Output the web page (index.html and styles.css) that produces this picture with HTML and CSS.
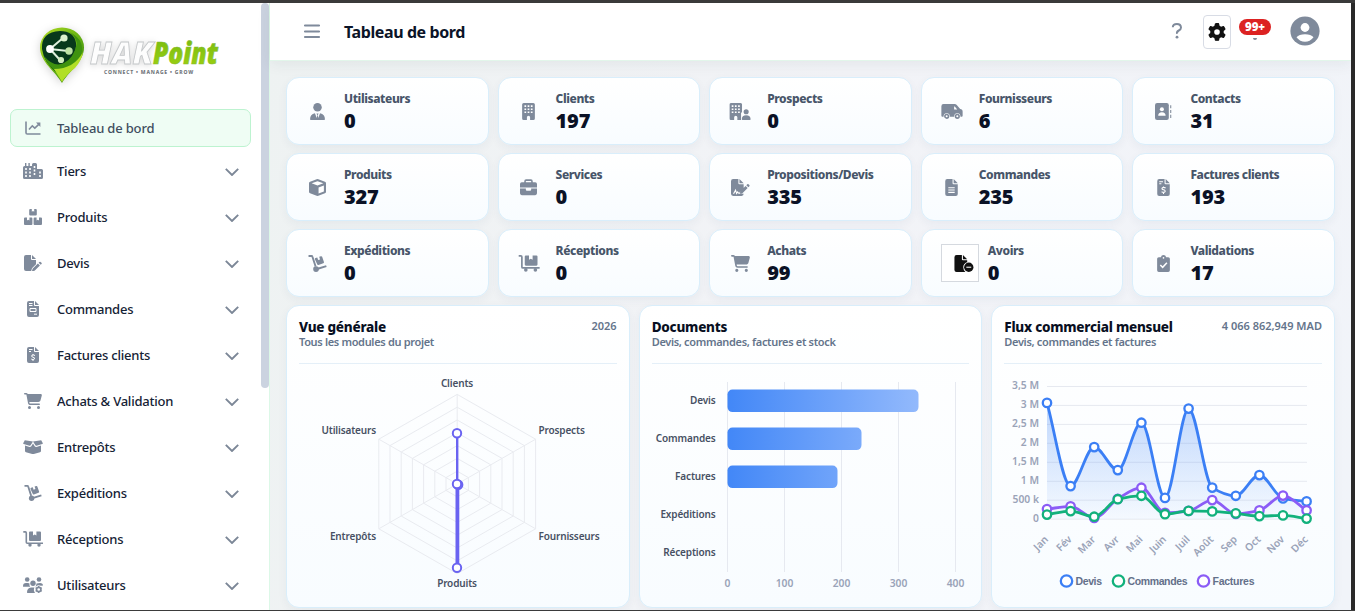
FILE: index.html
```html
<!DOCTYPE html>
<html lang="fr">
<head>
<meta charset="utf-8">
<title>HAKPoint - Tableau de bord</title>
<link rel="stylesheet" href="styles.css">
</head>
<body>
<svg class="defs" aria-hidden="true">
  <symbol id="chart" viewBox="0 0 16 16"><path class="ln" d="M1 1.5v11.2q0 1.3 1.3 1.3H15.5M4 9.500l3.300-3.700 2.500 2.300L14.300 3.800" stroke-width="1.600"/><path d="M11 2.600h4.400V7z"/></symbol>
  <symbol id="city" viewBox="0 0 20 16"><path d="M0 4.5q0-1.5 1.5-1.5H2V0h1.4v3h2V0h1.4v3H9V1.5Q9 0 10.500 0h2Q14 0 14 1.500V6h4.500Q20 6 20 7.500v7q0 1.500-1.500 1.500h-17Q0 16 0 14.500z"/><path class="cut" d="M2.200 5h1.600v2H2.200zm4 0h1.600v2H6.200zM2.200 8.500h1.600v2H2.200zm4 0h1.600v2H6.200zM2.200 12h1.600v2H2.200zm4 0h1.600v2H6.200zM10.700 3h1.600v2h-1.600zm0 3.500h1.600v2h-1.600zm0 3.500h1.600v2h-1.600zM16.200 8.500h1.600v2h-1.600zm0 3.500h1.600v2h-1.600z"/></symbol>
  <symbol id="boxes" viewBox="0 0 18 16"><path d="M5.200 1q0-1 1-1h1.600v2.700l1.200-.7 1.200.7V0h1.600q1 0 1 1v4.500q0 1-1 1H6.200q-1 0-1-1zM0 9.500q0-1 1-1h2v3l1.200-.7 1.200.7v-3h2q1 0 1 1V15q0 1-1 1H1q-1 0-1-1zM9.600 9.500q0-1 1-1h2v3l1.200-.7 1.200.7v-3h2q1 0 1 1V15q0 1-1 1h-6.400q-1 0-1-1z"/></symbol>
  <symbol id="filepen" viewBox="0 0 18 16"><path d="M0 2q0-2 2-2h5v4q0 1 1 1h4v4.300L8 13.200 7.200 16H2q-2 0-2-2zM8 0v4h4zM8.600 13.700l5.300-5.300 2 2-5.300 5.300-2.700.7zM14.600 7.700l.8-.8q.6-.5 1.200 0l.9.9q.5.600 0 1.200l-.8.800z"/></symbol>
  <symbol id="filesign" viewBox="0 0 18 16"><path d="M0 2q0-2 2-2h5v4q0 1 1 1h4v3.500L8 12.500V14h4q0 2-2 2H2q-2 0-2-2zM8 0v4h4zM8.800 11.500l5-5 2 2-5 5-2.700.7zM14.500 5.800l.9-.9q.6-.5 1.200 0l.8.800q.5.600 0 1.200l-.9.900z"/><path class="cutln" d="M2 13.500h.8l1.500-3 1 3.200 1-1.500 1 1.300h1.500" stroke-width="1"/></symbol>
  <symbol id="file" viewBox="0 0 12 16"><path d="M2 0h5v4q0 1 1 1h4v9q0 2-2 2H2q-2 0-2-2V2Q0 0 2 0zM8 0v4h4z"/></symbol>
  <symbol id="filelines" viewBox="0 0 12 16"><use href="#file"/><path class="cutln" d="M3 8.200h6M3 10.400h6M3 12.600h6" stroke-width="1"/></symbol>
  <symbol id="fileinvoice" viewBox="0 0 12 16"><use href="#file"/><path class="cutln" d="M2 2.500h3.500M2 4.500h3.500M3 7.500h6v3H3zM7 13.200h3" stroke-width="1"/></symbol>
  <symbol id="filedollar" viewBox="0 0 12 16"><use href="#file"/><path class="cutln" d="M2 2.500h3.500M2 4.500h2M8 8.500Q6 7.300 4.700 8.500q-.6 1.300 1.300 1.700 2 .4 1.500 1.700Q6.200 13.300 4.200 12M6 7v1.200M6 12.800V14" stroke-width="1"/></symbol>
  <symbol id="fileminus" viewBox="0 0 18 16"><path d="M0 2q0-2 2-2h5v4q0 1 1 1h4v1.500Q8.300 8 8.300 11.500q0 2.800 2 4.500H2q-2 0-2-2zM8 0v4h4z"/><circle cx="13.500" cy="11.500" r="4.400"/><path class="cutln" d="M11.200 11.500h4.600" stroke-width="1"/></symbol>
  <symbol id="cart" viewBox="0 0 576 512"><path d="M0 24C0 10.700 10.700 0 24 0H69.500c22 0 41.500 12.800 50.600 32h411c26.300 0 45.500 25 38.600 50.400l-41 152.300c-8.500 31.400-37 53.300-69.500 53.300H170.700l5.400 28.500c2.200 11.300 12.100 19.500 23.600 19.500H488c13.300 0 24 10.700 24 24s-10.700 24-24 24H199.700c-34.600 0-64.300-24.600-70.700-58.500L77.400 54.500c-.7-3.800-4-6.500-7.900-6.500H24C10.700 48 0 37.300 0 24zM128 464a48 48 0 1 1 96 0 48 48 0 1 1 -96 0zm336-48a48 48 0 1 1 0 96 48 48 0 1 1 0-96z"/></symbol>
  <symbol id="boxopen" viewBox="0 0 20 16"><path d="M1.800 1.300L10 2.400 7.600 6.300q-.4.600-1.100.4L.7 5.100Q-.1 4.800.3 4zM18.200 1.300L10 2.400l2.400 3.900q.4.600 1.100.4l5.800-1.600q.8-.3.400-1.100zM2 6.600l4.500 1.300q1.200.2 1.800-.7L10 4.400l1.700 2.800q.6.900 1.800.7L18 6.600V12q0 1-1 1.300l-6.200 1.600q-.8.200-1.600 0L3 13.300q-1-.3-1-1.300z"/></symbol>
  <symbol id="dolly" viewBox="0 0 18 16"><path class="ln" d="M.5.900h2.800q.7 0 .9.700l3 9.300M8.500 13.200l8.900-2.800" stroke-width="1.800"/><circle cx="7.600" cy="13.300" r="2.700"/><path d="M6.500 3.900q-.3-.9.600-1.200l1.700-.5.800 2.500 1.800-.6-.8-2.500 1.600-.5q.9-.3 1.200.6l1.700 4.900q.3.900-.6 1.200L9.900 9.400q-.9.300-1.200-.6z"/></symbol>
  <symbol id="flatbed" viewBox="0 0 20 16"><path class="ln" d="M.3.900h2q1 0 1 1v9.300q0 1 1 1H20" stroke-width="1.600"/><path d="M6 1.500q0-1 1-1h3v4l1.700-1 1.700 1v-4h3.600q1 0 1 1V9q0 1-1 1H7q-1 0-1-1z"/><circle cx="7" cy="14" r="1.700"/><circle cx="16" cy="14" r="1.700"/></symbol>
  <symbol id="usersgear" viewBox="0 0 20 16"><circle cx="4.200" cy="2.500" r="2.300"/><circle cx="16" cy="2.500" r="2.300"/><circle cx="10" cy="6.200" r="2.700"/><path d="M0 9.200Q0 6 3 6h2q1 0 1.500.4Q6 8 7.200 9.700H.5Q0 9.700 0 9.200zM13.500 6.400Q14.500 6 17 6q3 0 3 2.600l-2 .2q-3-1.500-5 .6h-.5q1-1.400 1-3zM4 15.300Q4 11 8 10.500h3.500Q10 13 12 16H4.500q-.5 0-.5-.7z"/><circle class="ln" cx="15.700" cy="12.500" r="2.200" stroke-width="1.700"/><path class="ln" stroke-width="1.300" d="M15.700 8.900v1.200M15.700 15v1.200M12.600 10.700l1 .6M17.800 13.700l1 .6M12.600 14.300l1-.6M17.800 11.300l1-.6"/></symbol>
  <symbol id="usertie" viewBox="0 0 14 16"><circle cx="7" cy="4" r="4"/><path d="M0 15.300Q0 10.300 4.600 9.600L6.300 14l.5-2.500-.8-1.700h2l-.8 1.700.5 2.500 1.700-4.400Q14 10.300 14 15.300q0 .7-.7.7H.7q-.7 0-.7-.7z"/></symbol>
  <symbol id="building" viewBox="0 0 12 16"><path d="M1.500 0h9Q12 0 12 1.500v13q0 1.500-1.500 1.500h-3v-2.500q0-1.500-1.500-1.500t-1.500 1.500V16h-3Q0 16 0 14.500v-13Q0 0 1.500 0z"/><path class="cut" d="M2.200 2.200h1.600v1.500H2.200zm3 0h1.600v1.500H5.200zm3 0h1.600v1.500H8.200zM2.200 5.200h1.600v1.500H2.200zm3 0h1.600v1.500H5.200zm3 0h1.600v1.500H8.200zM2.200 8.100h1.600v1.400H2.200zm3 0h1.600v1.400H5.200zm3 0h1.600v1.400H8.200z"/></symbol>
  <symbol id="buildinguser" viewBox="0 0 20 16"><use href="#building" width="12" height="16"/><path class="cut" d="M11 16V9h1.200V5.500H20V16z"/><circle cx="15.800" cy="8.300" r="2.400"/><path d="M11.700 15.300q0-3.700 4.100-3.700t4.200 3.700q0 .7-.7.700h-7q-.6 0-.6-.7z"/></symbol>
  <symbol id="truck" viewBox="0 0 20 16"><path d="M0 3q0-2 2-2h10.500q1.200 0 2 .9l3.200 3.700 1 .3q1.300.6 1.300 2V12q0 1-1 1H1q-1 0-1-1z"/><path class="cut" d="M12 3.300h.6l2.300 2.800H12z"/><circle cx="5" cy="12.500" r="2.900" class="cut"/><circle cx="15" cy="12.500" r="2.900" class="cut"/><circle class="ln" cx="5" cy="12.500" r="1.700" stroke-width="1.500"/><circle class="ln" cx="15" cy="12.500" r="1.700" stroke-width="1.500"/></symbol>
  <symbol id="contacts" viewBox="0 0 16 16"><rect width="13" height="16" rx="2"/><path d="M14.300 2h1v3h-1zm0 4.500h1v3h-1zm0 4.500h1v3h-1z"/><circle class="cut" cx="6.500" cy="5.800" r="1.900"/><path class="cut" d="M3 12q0-3.300 3.500-3.300T10 12z"/></symbol>
  <symbol id="cube" viewBox="0 0 16 16"><path d="M7.200.3q.8-.4 1.600 0l6.200 2.300q1 .4 1 1.400v8q0 1-1 1.400l-6.200 2.400q-.8.300-1.600 0L1 13.400Q0 13 0 12V4q0-1 1-1.400z"/><path class="cut" d="M8 2l5.500 2L8 6 2.500 4zM9 8l5-1.800v5.500L9 13.600z"/></symbol>
  <symbol id="briefcase" viewBox="0 0 16 16"><path d="M4 3V2q0-1.700 1.700-1.700h4.600Q12 .3 12 2v1h2.300Q16 3 16 4.700V8H0V4.700Q0 3 1.700 3zM5.500 3h5V1.800h-5zM0 9h5.500v1q0 1 1 1h3q1 0 1-1V9H16v4.500q0 1.700-1.700 1.700H1.700Q0 15.200 0 13.500z" fill-rule="evenodd"/></symbol>
  <symbol id="clipcheck" viewBox="0 0 12 16"><path d="M1.600 2H3.500Q4 0 6 0t2.500 2h1.900Q12 2 12 3.600v10.800q0 1.600-1.600 1.600H1.600Q0 16 0 14.400V3.600Q0 2 1.600 2z"/><circle class="cut" cx="6" cy="2.700" r=".8"/><path class="cutln" d="M3 9.400l2.200 2.200L9.200 7.200" stroke-width="1.400"/></symbol>
  <symbol id="gear" viewBox="0 0 512 512"><path d="M495.900 166.600c3.200 8.700 .5 18.400-6.400 24.600l-43.300 39.400c1.100 8.300 1.700 16.800 1.700 25.400s-.6 17.100-1.700 25.400l43.300 39.400c6.900 6.200 9.600 15.900 6.400 24.600c-4.400 11.900-9.700 23.300-15.800 34.300l-4.700 8.100c-6.600 11-14 21.400-22.100 31.200c-5.900 7.200-15.700 9.600-24.500 6.800l-55.700-17.700c-13.400 10.300-28.200 18.900-44 25.400l-12.500 57.100c-2 9.100-9 16.300-18.200 17.800c-13.800 2.300-28 3.500-42.500 3.500s-28.700-1.200-42.500-3.500c-9.200-1.500-16.200-8.700-18.200-17.800l-12.500-57.100c-15.800-6.500-30.600-15.100-44-25.400L83.100 425.900c-8.800 2.800-18.600 .3-24.500-6.800c-8.100-9.800-15.500-20.200-22.100-31.200l-4.700-8.100c-6.100-11-11.400-22.400-15.800-34.300c-3.200-8.700-.5-18.400 6.400-24.600l43.300-39.400C64.600 273.100 64 264.600 64 256s.6-17.100 1.700-25.400L22.400 191.200c-6.900-6.200-9.600-15.900-6.400-24.600c4.400-11.900 9.700-23.300 15.800-34.300l4.700-8.100c6.600-11 14-21.400 22.100-31.200c5.900-7.200 15.700-9.600 24.500-6.800l55.700 17.700c13.400-10.300 28.200-18.900 44-25.400l12.500-57.100c2-9.100 9-16.300 18.200-17.800C227.300 1.200 241.500 0 256 0s28.700 1.200 42.500 3.500c9.200 1.500 16.200 8.700 18.200 17.800l12.500 57.100c15.800 6.500 30.600 15.100 44 25.400l55.700-17.700c8.800-2.800 18.600-.3 24.500 6.800c8.100 9.800 15.500 20.200 22.100 31.200l4.700 8.100c6.100 11 11.400 22.400 15.800 34.300zM256 336a80 80 0 1 0 0-160 80 80 0 1 0 0 160z"/></symbol>
  <symbol id="down" viewBox="0 0 14 8"><path class="ln" d="M.8.800L7 7 13.200.8" stroke-width="1.900"/></symbol>
</svg>

<div class="app">
  <aside class="sidebar">
    <div class="menu">
      <svg class="logo" viewBox="0 0 200 70" role="img" aria-label="HAKPoint">
        <defs>
          <linearGradient id="pin" x1="0" y1="0" x2="1" y2="1"><stop offset="0" stop-color="#b4dc22"/><stop offset=".5" stop-color="#69b514"/><stop offset="1" stop-color="#2c7a0c"/></linearGradient>
          <linearGradient id="lime" x1="0" y1="0" x2="0" y2="1"><stop offset="0" stop-color="#6fb80f"/><stop offset="1" stop-color="#a2d313"/></linearGradient>
        </defs>
        <g class="pin">
          <path fill="url(#pin)" d="M32 65C26 54 10 44 10 29.500A22 20 0 0 1 54 29.500C54 44 38 54 32 65z"/>
          <path fill="#07391b" d="M12 31Q11 14 30 13q14 0 16 12 1 13-13 22-3 3-5 9Q14 45 12 31z"/>
          <path fill="#3f930f" d="M14 38q10 12 20 7 10-5 13-20-2-8-8-11 14 6 13 19-2 11-12 18-6 6-8 12-4-8-9-12-6-5-9-13z"/>
          <path fill="#b1df26" d="M24 51q20 0 29-17-1 8-8 16-9 7-13 14z"/>
          <path d="M20 31L33 20M20 31l18 2M20 31l10 11" stroke="#dff0dc" stroke-width="2" fill="none"/>
          <circle cx="20" cy="31" r="3.900" fill="#fff"/><circle cx="34" cy="20" r="3.600" fill="#dcf2cd"/><circle cx="39" cy="33" r="3.700" fill="#bfe3a6"/><circle cx="31" cy="42" r="3.100" fill="#d3edc0"/>
        </g>
        <text class="hak" x="60" y="45.500" textLength="63" lengthAdjust="spacingAndGlyphs">HAK</text>
        <text class="point" x="123" y="45.500" textLength="65" lengthAdjust="spacingAndGlyphs">Point</text>
        <text class="tag" x="74" y="56" textLength="90" lengthAdjust="spacingAndGlyphs">CONNECT • MANAGE • GROW</text>
      </svg>
      <nav class="nav">
        <a class="item active"><svg class="ic w16"><use href="#chart"/></svg><span>Tableau de bord</span></a>
        <a class="item"><svg class="ic w20"><use href="#city"/></svg><span>Tiers</span><svg class="chev"><use href="#down"/></svg></a>
        <a class="item"><svg class="ic w18"><use href="#boxes"/></svg><span>Produits</span><svg class="chev"><use href="#down"/></svg></a>
        <a class="item"><svg class="ic w18"><use href="#filepen"/></svg><span>Devis</span><svg class="chev"><use href="#down"/></svg></a>
        <a class="item"><svg class="ic w12"><use href="#fileinvoice"/></svg><span>Commandes</span><svg class="chev"><use href="#down"/></svg></a>
        <a class="item"><svg class="ic w12"><use href="#filedollar"/></svg><span>Factures clients</span><svg class="chev"><use href="#down"/></svg></a>
        <a class="item"><svg class="ic w18"><use href="#cart"/></svg><span>Achats &amp; Validation</span><svg class="chev"><use href="#down"/></svg></a>
        <a class="item"><svg class="ic w20"><use href="#boxopen"/></svg><span>Entrepôts</span><svg class="chev"><use href="#down"/></svg></a>
        <a class="item"><svg class="ic w18"><use href="#dolly"/></svg><span>Expéditions</span><svg class="chev"><use href="#down"/></svg></a>
        <a class="item"><svg class="ic w20"><use href="#flatbed"/></svg><span>Réceptions</span><svg class="chev"><use href="#down"/></svg></a>
        <a class="item"><svg class="ic w20"><use href="#usersgear"/></svg><span>Utilisateurs</span><svg class="chev"><use href="#down"/></svg></a>
      </nav>
    </div>
    <div class="track"><div class="thumb"></div></div>
  </aside>

  <div class="content">
    <header class="topbar">
      <svg class="burger" viewBox="0 0 16 14"><path class="ln" d="M.8 1.500h14.400M.8 7.500h14.400M.8 13h14.400" stroke-width="1.900" stroke-linecap="round"/></svg>
      <h1>Tableau de bord</h1>
      <svg class="help" viewBox="0 0 12 16"><path class="ln" d="M1.800 4.200Q2 1 5.900 1t4.100 3.500q0 1.800-2.200 3T6 10.700" stroke-width="2"/><circle cx="6" cy="14.200" r="1.400"/></svg>
      <button class="settings"><svg><use href="#gear"/></svg></button>
      <div class="alerts"><span class="badge">99+</span><i class="clapper"></i></div>
      <svg class="avatar" viewBox="0 0 30 30"><circle cx="15" cy="15" r="14.600"/><circle class="cut" cx="15" cy="11.500" r="4.400"/><path class="cut" d="M6.500 21.200Q9 18.300 15 18.300t8.500 2.900Q20 25.800 15 25.800T6.500 21.200z"/></svg>
    </header>

    <main class="board">
      <section class="stats">
        <div class="stat"><svg class="ic w14"><use href="#usertie"/></svg><div><h3>Utilisateurs</h3><b>0</b></div></div>
        <div class="stat"><svg class="ic w13"><use href="#building"/></svg><div><h3>Clients</h3><b>197</b></div></div>
        <div class="stat"><svg class="ic w22"><use href="#buildinguser"/></svg><div><h3>Prospects</h3><b>0</b></div></div>
        <div class="stat"><svg class="ic w22"><use href="#truck"/></svg><div><h3>Fournisseurs</h3><b>6</b></div></div>
        <div class="stat"><svg class="ic w17"><use href="#contacts"/></svg><div><h3>Contacts</h3><b>31</b></div></div>
        <div class="stat"><svg class="ic w17"><use href="#cube"/></svg><div><h3>Produits</h3><b>327</b></div></div>
        <div class="stat"><svg class="ic w17"><use href="#briefcase"/></svg><div><h3>Services</h3><b>0</b></div></div>
        <div class="stat"><svg class="ic w19"><use href="#filesign"/></svg><div><h3>Propositions/Devis</h3><b>335</b></div></div>
        <div class="stat"><svg class="ic w13"><use href="#filelines"/></svg><div><h3>Commandes</h3><b>235</b></div></div>
        <div class="stat"><svg class="ic w13"><use href="#filedollar"/></svg><div><h3>Factures clients</h3><b>193</b></div></div>
        <div class="stat"><svg class="ic w19"><use href="#dolly"/></svg><div><h3>Expéditions</h3><b>0</b></div></div>
        <div class="stat"><svg class="ic w22"><use href="#flatbed"/></svg><div><h3>Réceptions</h3><b>0</b></div></div>
        <div class="stat"><svg class="ic w19"><use href="#cart"/></svg><div><h3>Achats</h3><b>99</b></div></div>
        <div class="stat boxed"><span class="frame"><svg class="ic w20"><use href="#fileminus"/></svg></span><div><h3>Avoirs</h3><b>0</b></div></div>
        <div class="stat"><svg class="ic w13"><use href="#clipcheck"/></svg><div><h3>Validations</h3><b>17</b></div></div>
      </section>

      <section class="panels">
        <article class="panel">
          <div class="head"><div><h2>Vue générale</h2><p>Tous les modules du projet</p></div><em>2026</em></div>
          <svg class="plot" viewBox="0 0 343 244">
            <g id="rings" class="web"></g>
            <g class="names">
              <text x="171" y="23.200" text-anchor="middle">Clients</text>
              <text x="252.500" y="70.200">Prospects</text>
              <text x="252.500" y="176.200">Fournisseurs</text>
              <text x="171" y="223.200" text-anchor="middle">Produits</text>
              <text x="90" y="176.200" text-anchor="end">Entrepôts</text>
              <text x="90" y="70.200" text-anchor="end">Utilisateurs</text>
            </g>
            <path d="M171.200 69.500V120.500" stroke="#6a63f1" stroke-width="2.400"/>
            <path d="M171.400 120.500V203.500" stroke="#6a63f1" stroke-width="3.800"/>
            <g class="knobs"><circle cx="172.200" cy="120.700" r="4.200"/><circle cx="171" cy="69.300" r="4.200"/><circle cx="171" cy="120" r="4.200"/><circle cx="171" cy="203.700" r="4.200"/></g>
          </svg>
        </article>

        <article class="panel">
          <div class="head"><div><h2>Documents</h2><p>Devis, commandes, factures et stock</p></div></div>
          <svg class="plot" viewBox="0 0 343 244">
            <defs><linearGradient id="bar" gradientUnits="userSpaceOnUse" x1="88" y1="0" x2="279" y2="0"><stop offset="0" stop-color="#4287f7"/><stop offset="1" stop-color="#92b9fc"/></linearGradient></defs>
            <path class="grid" d="M88.500 18V208M145.500 18V208M202.500 18V208M259.500 18V208M316.500 18V208"/>
            <rect x="88.500" y="25.500" width="191" height="22.600" rx="5" fill="url(#bar)"/>
            <rect x="88.500" y="63.500" width="134" height="22.600" rx="5" fill="url(#bar)"/>
            <rect x="88.500" y="101.500" width="110" height="22.600" rx="5" fill="url(#bar)"/>
            <g class="names" text-anchor="end">
              <text x="76.500" y="40.200">Devis</text><text x="76.500" y="78.200">Commandes</text><text x="76.500" y="116.200">Factures</text><text x="76.500" y="154.200">Expéditions</text><text x="76.500" y="192.200">Réceptions</text>
            </g>
            <g class="ticks" text-anchor="middle">
              <text x="88.500" y="223.200">0</text><text x="145.500" y="223.200">100</text><text x="202.500" y="223.200">200</text><text x="259.500" y="223.200">300</text><text x="316.500" y="223.200">400</text>
            </g>
          </svg>
        </article>

        <article class="panel">
          <div class="head"><div><h2>Flux commercial mensuel</h2><p>Devis, commandes et factures</p></div><em>4 066 862,949 MAD</em></div>
          <svg class="plot" viewBox="0 0 343 244">
            <defs>
              <linearGradient id="fade" x1="0" y1="0" x2="0" y2="1"><stop offset="0" stop-color="#3b82f6" stop-opacity=".32"/><stop offset="1" stop-color="#3b82f6" stop-opacity=".03"/></linearGradient>
            </defs>
            <path class="grid" d="M56 22.500H316M56 41.400H316M56 60.400H316M56 79.300H316M56 98.300H316M56 117.300H316M56 136.200H316M56 155.200H316"/>
            <g class="ticks" text-anchor="end">
              <text x="48" y="25.200">3,5 M</text><text x="48" y="44.200">3 M</text><text x="48" y="63.200">2,5 M</text><text x="48" y="82.200">2 M</text><text x="48" y="101.200">1,5 M</text><text x="48" y="120.200">1 M</text><text x="48" y="139.200">500 k</text><text x="48" y="158.200">0</text>
            </g>
            <g id="months" class="ticks" text-anchor="end"></g>
            <g id="series"></g>
            <g class="legend">
              <circle cx="75.500" cy="217" r="5.700" stroke="#3b7ff5"/><text x="84.500" y="220.500" textLength="26.500">Devis</text>
              <circle cx="127.500" cy="217" r="5.700" stroke="#12b17c"/><text x="136.500" y="220.500" textLength="60">Commandes</text>
              <circle cx="212.500" cy="217" r="5.700" stroke="#8b5cf6"/><text x="221.500" y="220.500" textLength="42">Factures</text>
            </g>
          </svg>
        </article>
      </section>
    </main>
  </div>
  <div class="edge"></div>
</div>
<script src="charts.js"></script>
</body>
</html>
```

FILE: styles.css
```css
* { box-sizing: border-box; margin: 0; padding: 0; }
body {
  height: 611px; overflow: hidden; background: #3b3b3b;
  font-family: "Noto Sans", "Open Sans", sans-serif; color: #0f172a;
}
.defs { display: none; }
svg { fill: currentColor; flex: none; }
.ln { fill: none; stroke: currentColor; }
.cut { fill: #fff; }
.cutln { fill: none; stroke: #fff; }

.app { display: flex; height: 611px; padding: 3px 0 1px; }
.sidebar { display: flex; flex: none; width: 270px; background: #fff; border-right: 1px solid #dcf8e7; }
.menu { width: 261px; overflow: hidden; }
.track { width: 8px; }
.thumb { height: 385px; border-radius: 4px; background: #cbd3e0; }
.edge { flex: none; width: 4px; background: #292929; }

.logo { display: block; width: 200px; height: 70px; margin: 15px 0 0 30px; overflow: visible; }
.pin { filter: drop-shadow(0 2px 5px rgba(0,0,0,.18)); }
.hak, .point { font-size: 29.500px; font-weight: 900; font-style: italic; }
.hak { fill: #fdfdfd; stroke: #c4c7c9; stroke-width: .8px; filter: drop-shadow(0 1px 3px rgba(0,0,0,.15)); }
.point { fill: url(#lime); stroke: #86b92f; stroke-width: .6px; }
.tag { font-size: 5px; font-weight: 800; fill: #70757a; letter-spacing: .8px; }

.nav { margin: 21px 10px 0; }
.item {
  display: flex; align-items: center; height: 46px; padding: 0 10px 0 12px; color: #152235;
  font-size: 13px; font-weight: 500; letter-spacing: -.22px;
}
.item.active {
  height: 38px; margin-bottom: 1px; padding: 0 11px; color: #3f4e5f;
  background: #effdf4; border: 1px solid #bdf3d0; border-radius: 7px; letter-spacing: -.17px;
}
.item .w20 { margin: 0 14px 0 1px; } .item .w18 { margin: 0 15px 0 2px; }
.item .w16 { margin: 0 16px 0 3px; } .item .w12 { margin: 0 18px 0 5px; }
.ic { height: 16px; color: #7f8a9b; }
.w12 { width: 12px; } .w13 { width: 13px; } .w14 { width: 15px; } .w16 { width: 16px; }
.w17 { width: 17px; } .w18 { width: 18px; } .w19 { width: 19px; } .w20 { width: 20px; } .w22 { width: 22px; }
.chev { width: 14px; height: 8px; margin: 2px 2px 0 auto; color: #7c8797; }

.content { flex: 1; min-width: 0; display: flex; flex-direction: column; background: linear-gradient(100deg, #eef2f2, #f2f3f7 50%, #f1f4f9); }
.topbar {
  display: flex; align-items: center; height: 58px; padding: 0 31px 2px 34px; background: #fff;
  border-bottom: 1px solid #e2f6ea; color: #7f8a9b; box-shadow: 0 3px 14px rgba(30,60,50,.07);
}
.burger { width: 16px; height: 14px; }
.topbar h1 { margin: 2px auto 0 24px; font-size: 16px; font-weight: 700; line-height: 22px; letter-spacing: -.4px; color: #0b1428; }
.help { width: 12px; height: 16px; margin-right: 20px; }
.settings {
  display: grid; place-items: center; width: 28px; height: 34px; margin-top: 2px; color: #111;
  background: #fff; border: 1px solid #d8dce5; border-radius: 4px;
}
.settings svg { width: 18px; height: 18px; }
.alerts { display: flex; flex-direction: column; align-items: center; width: 32px; height: 23px; margin: 0 19px 0 8px; }
.badge {
  width: 32px; height: 16px; border-radius: 8px; background: #dc2222; color: #fff;
  font-size: 11.500px; font-weight: 900; line-height: 16px; text-align: center;
}
.clapper { width: 4px; height: 2px; margin-top: 3px; border-radius: 0 0 2px 2px; background: #7f8a9b; }
.avatar { width: 30px; height: 30px; }

.board { padding: 16px 16px 0; }
.stats { display: grid; grid-template-columns: repeat(5, minmax(0, 1fr)); grid-auto-rows: 68px; gap: 8px 9px; }
.stat, .panel {
  background: linear-gradient(#fff, #f8fcff); border: 1px solid #d9eefb; border-radius: 13px;
  box-shadow: 0 3px 10px rgba(40,60,90,.05);
}
.stat { display: grid; grid-template-columns: 22px auto; column-gap: 16px; justify-content: start; align-items: center; padding-left: 19px; }
.stat .ic { height: 17px; justify-self: center; }
.stat > div { padding-top: 2px; }
.stat h3 { font-size: 12px; font-weight: 800; line-height: 18px; color: #475569; letter-spacing: -.42px; }
.stat b { display: block; font-size: 20px; font-weight: 900; line-height: 26px; color: #0b1226; letter-spacing: -.2px; }
.boxed { grid-template-columns: 38px auto; column-gap: 9px; }
.frame { display: flex; align-items: center; justify-content: flex-end; width: 38px; height: 38px; padding-right: 4px; border: 1px solid #d5d9df; background: #fff; }
.frame .ic { color: #111; }

.panels { display: grid; grid-template-columns: repeat(3, minmax(0, 1fr)); gap: 9px; margin-top: 8px; }
.panel { height: 303px; }
.head {
  display: flex; justify-content: space-between; height: 58px; margin: 0 12px;
  padding-top: 12px; border-bottom: 1px solid #e4eff8;
}
.head h2 { font-size: 13.500px; font-weight: 800; line-height: 18px; color: #080f22; letter-spacing: -.25px; }
.head p { font-size: 11px; font-weight: 600; line-height: 12px; color: #64748b; letter-spacing: -.33px; }
.head em { font-size: 11px; font-style: normal; font-weight: 600; line-height: 16px; color: #64748b; }
.plot { display: block; width: 343px; height: 244px; margin-left: -1px; }
.grid { fill: none; stroke: #e6e9f0; }
.web { fill: none; stroke: #e9ebf0; }
.names { font-size: 10px; font-weight: 600; fill: #475063; letter-spacing: -.15px; }
.ticks { font-size: 10.300px; font-weight: 600; fill: #9aa3b8; }
.knobs circle { fill: #fff; stroke: #6a63f1; stroke-width: 2px; }
.legend { font: bold 10.500px "Liberation Sans", Arial, sans-serif; fill: #64708a; }
.legend circle { fill: #fff; stroke-width: 2.300px; }
```

FILE: charts.js
```js
const add = (parent, tag, attrs, text) => {
  const el = document.createElementNS("http://www.w3.org/2000/svg", tag);
  for (const k in attrs) el.setAttribute(k, attrs[k]);
  if (text) el.textContent = text;
  parent.appendChild(el);
};

// Radar web: seven rings and three diagonals
const rings = document.getElementById("rings");
for (let k = 1; k <= 7; k++) {
  const dy = 89.6 * k / 7, dx = dy * 0.875, x = 171.2, y = 120;
  add(rings, "polygon", { points: `${x},${y - dy} ${x + dx},${y - dy / 2} ${x + dx},${y + dy / 2} ${x},${y + dy} ${x - dx},${y + dy / 2} ${x - dx},${y - dy / 2}` });
}
add(rings, "path", { d: "M171.200 30.400V209.600M92.800 75.200L249.600 164.800M249.600 75.200L92.800 164.800" });

// Monthly flow
const X0 = 56, STEP = 23.6, BASE = 154.8;
const months = ["Jan", "Fév", "Mar", "Avr", "Mai", "Juin", "Juil", "Août", "Sep", "Oct", "Nov", "Déc"];
months.forEach((m, i) => {
  const x = X0 + STEP * i + 2, y = 176;
  add(document.getElementById("months"), "text", { x, y, transform: `rotate(-45 ${x} ${y})` }, m);
});

const smooth = ys => {
  const s = ys.slice(1).map((y, i) => y - ys[i]);
  const t = ys.map((_, i) => {
    if (i === 0 || i === ys.length - 1) return s[i] === undefined ? s[i - 1] : s[i];
    return s[i - 1] * s[i] <= 0 ? 0 : 2 * s[i - 1] * s[i] / (s[i - 1] + s[i]);
  });
  let d = `M${X0} ${ys[0]}`;
  for (let i = 1; i < ys.length; i++) {
    const a = X0 + STEP * (i - 1), b = X0 + STEP * i;
    d += `C${a + STEP / 3} ${ys[i - 1] + t[i - 1] / 3} ${b - STEP / 3} ${ys[i] - t[i] / 3} ${b} ${ys[i]}`;
  }
  return d;
};

const layer = document.getElementById("series");
const lines = [
  ["#3b7ff5", [38.9, 122.1, 83.1, 106.1, 58.7, 133.9, 44.6, 123.6, 131.8, 111.1, 134.4, 137.4]],
  ["#8b5cf6", [145.1, 142.4, 154, 134.9, 123.7, 148.9, 146.9, 136.1, 149.9, 146.4, 131.6, 146.4]],
  ["#12b17c", [150.6, 147.1, 152.7, 135.2, 131.8, 150.2, 146.9, 147.4, 149.4, 152.1, 151.4, 154.6]]
];
add(layer, "path", { d: smooth(lines[0][1]) + `V${BASE}H${X0}Z`, fill: "url(#fade)" });
lines.forEach(([color, ys]) => {
  add(layer, "path", { d: smooth(ys), fill: "none", stroke: color, "stroke-width": 2.8 });
  ys.forEach((y, i) => add(layer, "circle", { cx: X0 + STEP * i, cy: y, r: 4.2, fill: "#fff", stroke: color, "stroke-width": 2.3 }));
});
```
